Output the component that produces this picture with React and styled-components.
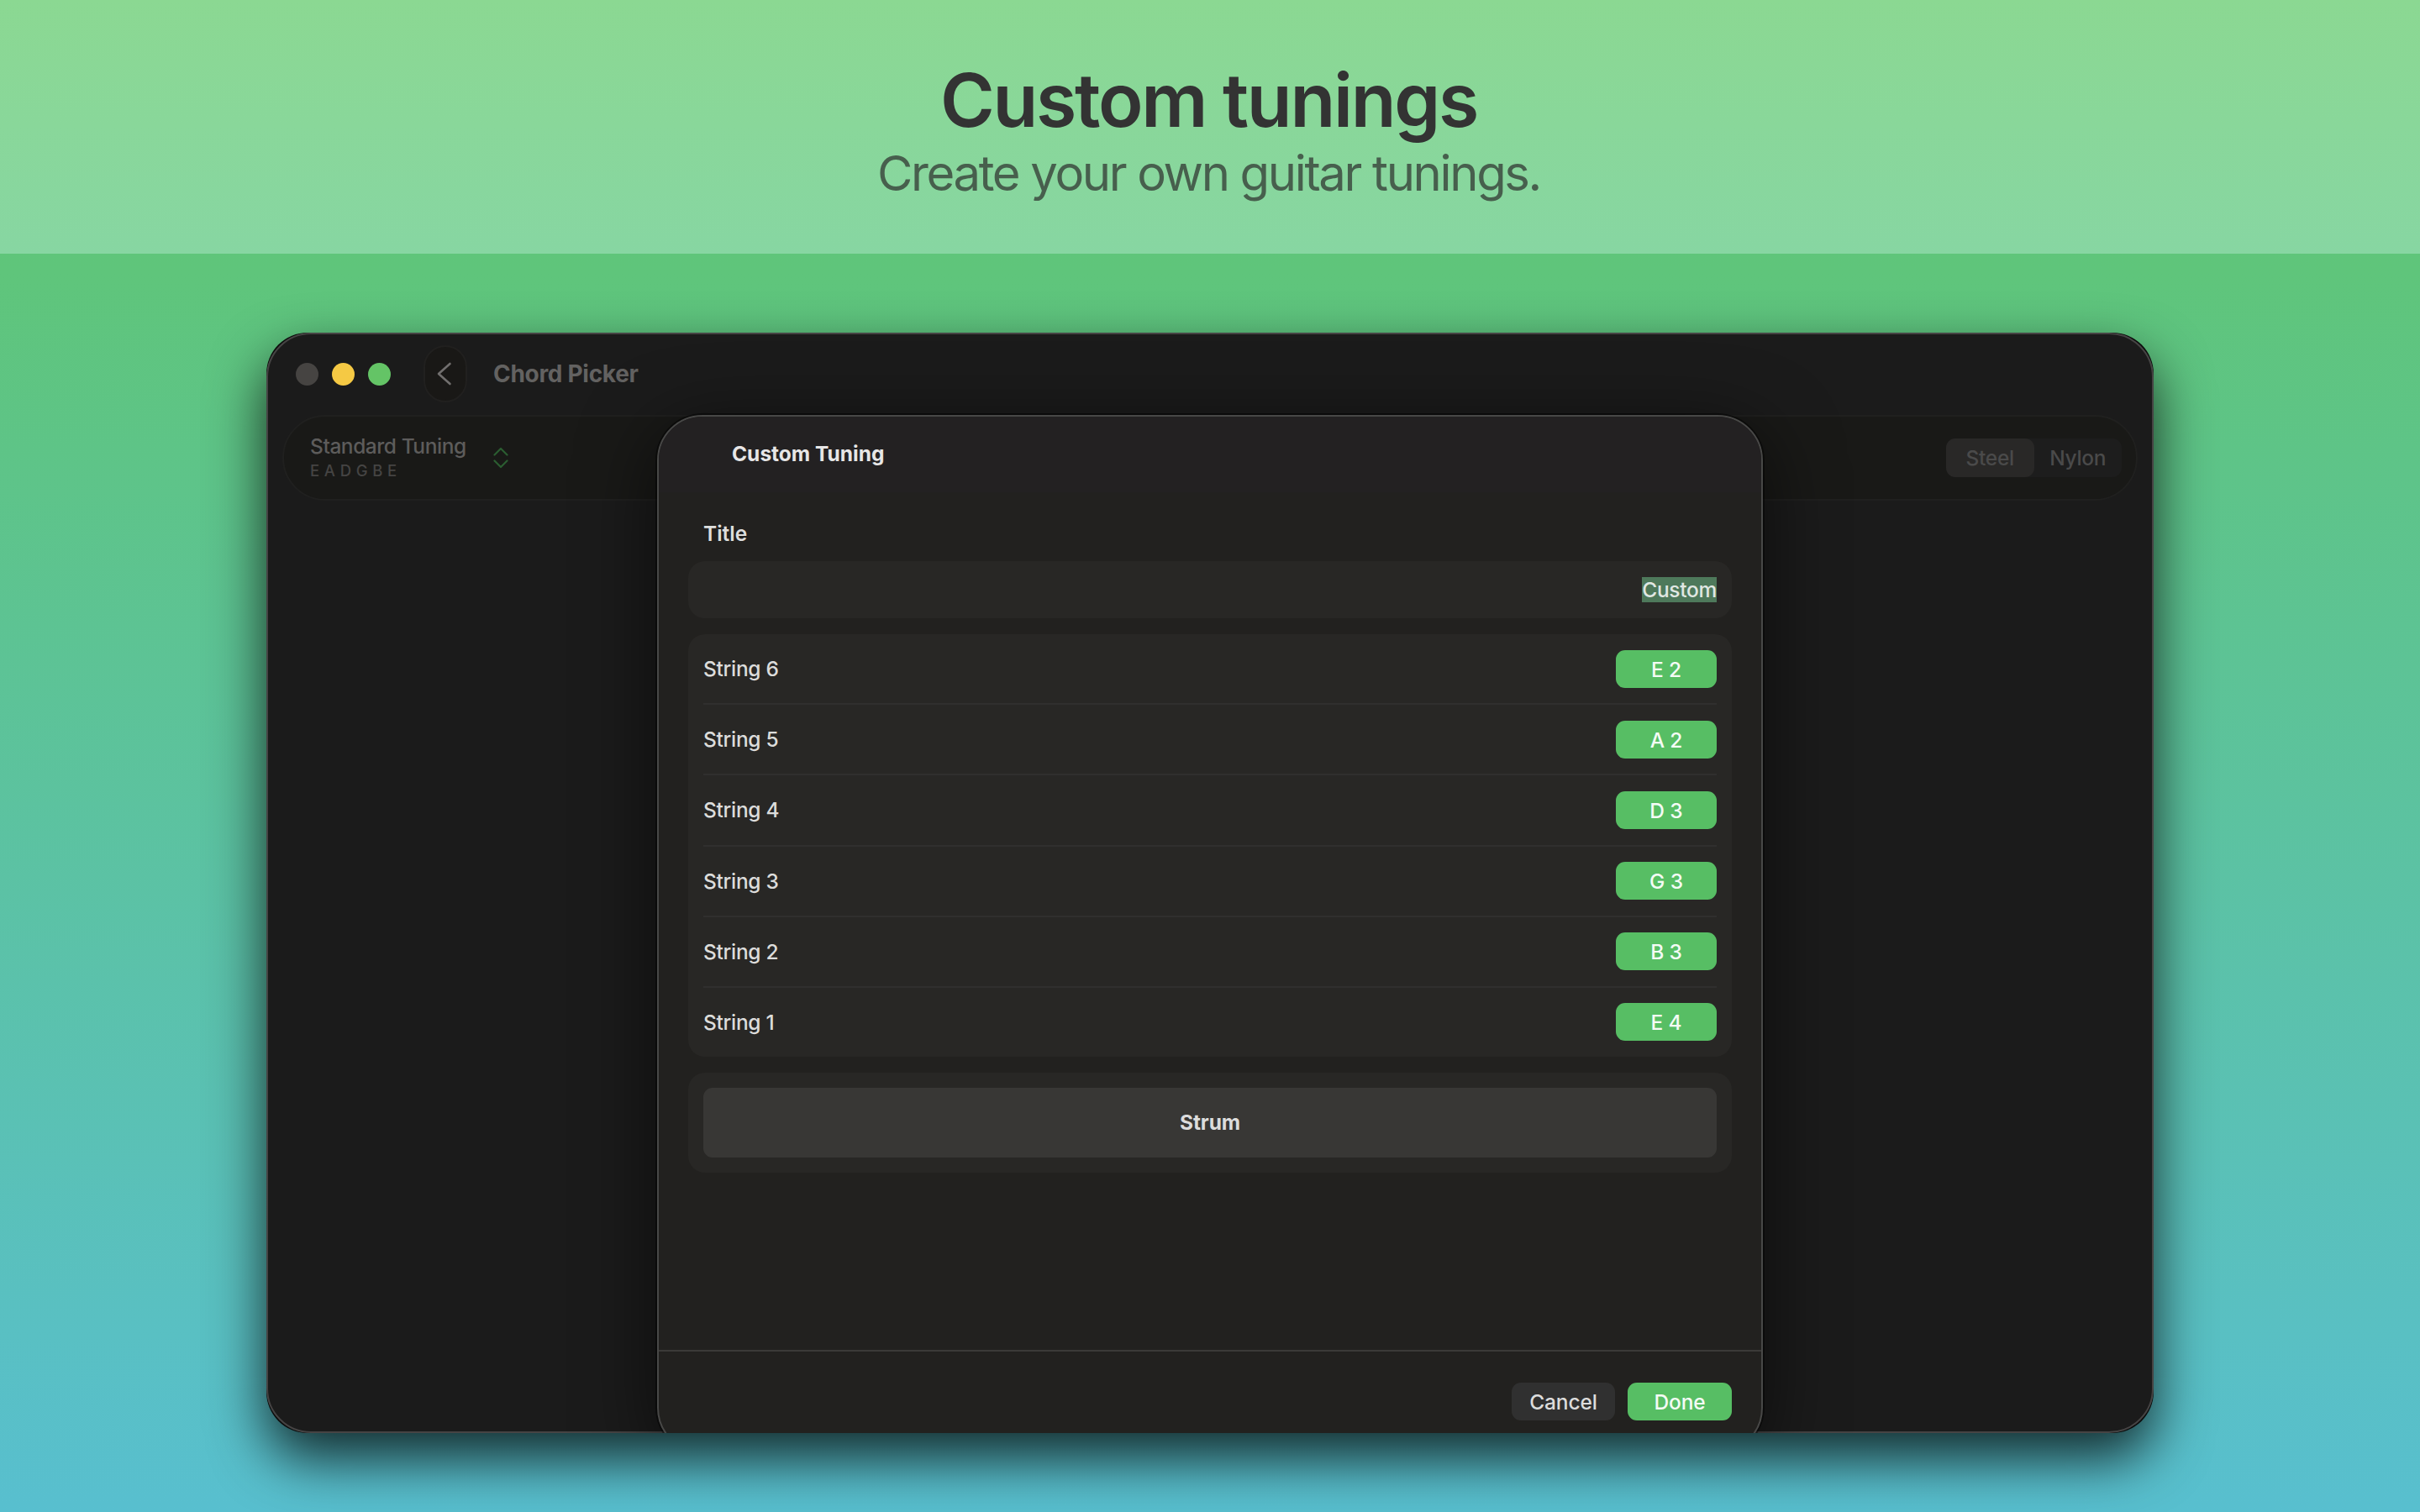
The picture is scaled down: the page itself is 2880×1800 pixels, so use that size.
import React from 'react';
import styled, { createGlobalStyle } from 'styled-components';

const GlobalStyle = createGlobalStyle`
    * {
        box-sizing: border-box;
    }
    body {
        margin: 0;
        font-family: Inter, "Liberation Sans", sans-serif;
    }
    p, h1, h2 {
        margin: 0;
        font-weight: inherit;
    }
    button {
        border: 0;
        padding: 0;
        font-family: inherit;
    }
`

const Page = styled.div`
    width: 2880px;
    height: 1800px;
    overflow: hidden;
    background: linear-gradient(180deg, #5fc671 0%, #5fc57b 18%, #58bfcf 100%);
`

const Banner = styled.header`
    height: 302px;
    padding: 66px 3px 0 0;
    text-align: center;
    background: linear-gradient(180deg, #8bd892, #87d6a2);
`

const Headline = styled.h1`
    font-size: 88px;
    line-height: 106px;
    font-weight: 600;
    letter-spacing: -2.3px;
    color: #333333;
`

const Tagline = styled.p`
    font-size: 58px;
    line-height: 69px;
    font-weight: 420;
    letter-spacing: -2.35px;
    color: #475f4d;
`

const Window = styled.div`
    position: relative;
    width: 2246px;
    height: 1310px;
    margin: 94px 0 0 317px;
    border-radius: 49px;
    background: #0b0b0b;
    box-shadow: 0 30px 66px rgba(0, 0, 0, 0.78);
`

const WindowBody = styled.div`
    height: 100%;
    border: 2px solid #464444;
    border-radius: 53px;
    padding: 13px 17px;
    background: #1b1b1b;
`

const TitleBar = styled.div`
    display: flex;
    align-items: center;
    height: 68px;
    padding-left: 16px;
`

const Light = styled.span`
    width: 27px;
    height: 27px;
    margin-right: 16px;
    border-radius: 50%;
    background: ${({ color }) => color};
`

const BackButton = styled.button`
    display: flex;
    align-items: center;
    justify-content: center;
    width: 52px;
    height: 68px;
    margin: 0 31px 0 23px;
    padding-right: 3px;
    border: 2px solid #21201f;
    border-radius: 26px;
    background: #191816;
`

const WindowTitle = styled.h2`
    font-size: 28px;
    font-weight: 700;
    letter-spacing: -0.3px;
    color: #636261;
`

const Toolbar = styled.div`
    display: flex;
    align-items: center;
    height: 102px;
    margin-top: 15px;
    padding: 0 17px 0 31px;
    border: 2px solid #20201f;
    border-radius: 51px;
    background: #191917;
`

const TuningName = styled.p`
    padding-top: 2px;
    font-size: 24.5px;
    line-height: 28px;
    font-weight: 450;
    letter-spacing: -0.45px;
    color: #5d5c5b;
`

const TuningNotes = styled.p`
    font-size: 18.5px;
    line-height: 30px;
    font-weight: 450;
    letter-spacing: 5.7px;
    color: #454443;
`

const UpDown = styled.svg`
    margin-left: 32px;
`

const Segmented = styled.div`
    display: flex;
    width: 209px;
    height: 46px;
    margin-left: auto;
    border-radius: 11px;
    background: #1d1d1d;
`

const Segment = styled.span`
    flex: 1;
    border-radius: 11px;
    font-size: 24.5px;
    line-height: 47px;
    font-weight: 450;
    letter-spacing: -0.3px;
    text-align: center;
    color: #4a4a4a;
    background: ${({ $active }) => $active ? '#292827' : 'transparent'};
`

// The window cuts off the lower edge of the sheet.
const SheetClip = styled.div`
    position: absolute;
    inset: 0;
    overflow: hidden;
    border-radius: 49px;
`

const Sheet = styled.section`
    position: absolute;
    top: 98px;
    left: 465px;
    display: flex;
    flex-direction: column;
    width: 1316px;
    height: 1236px;
    border: 2px solid #484847;
    border-radius: 54px;
    background: #22211f;
    box-shadow: 0 0 0 2px rgba(0, 0, 0, 0.45), 0 20px 90px rgba(0, 0, 0, 0.6);
`

const SheetHeader = styled.div`
    height: 90px;
    padding: 28px 0 0 87px;
    border-radius: 52px 52px 0 0;
    background: #232122;
    font-size: 24.5px;
    line-height: 32px;
    font-weight: 700;
    color: #e7e6e6;
`

const Form = styled.div`
    flex: 1;
    padding: 32px 35px 0;
`

const FieldTitle = styled.p`
    height: 50px;
    padding-left: 18px;
    font-size: 24.5px;
    line-height: 35px;
    font-weight: 600;
    color: #dededd;
`

const Card = styled.div`
    margin-bottom: 19px;
    padding: ${({ $pad }) => $pad || '0 18px'};
    border-radius: 20px;
    background: #282725;
`

const NameField = styled(Card)`
    display: flex;
    align-items: center;
    justify-content: flex-end;
    height: 68px;
`

const Selection = styled.span`
    height: 30px;
    font-size: 24.5px;
    line-height: 31px;
    font-weight: 450;
    letter-spacing: -0.3px;
    color: #e0e7e2;
    background: #4e795b;
`

const StringRow = styled.div`
    display: flex;
    align-items: center;
    justify-content: space-between;
    height: 84.2px;
    border-bottom: 2px solid #302f2e;
    font-size: 24.5px;
    font-weight: 450;
    letter-spacing: -0.3px;
    color: #dcdcdb;

    &:last-child {
        height: 82px;
        border: 0;
    }
`

const Button = styled.button`
    width: ${({ $width }) => $width};
    height: 45px;
    border-radius: 11px;
    font-size: 24.5px;
    line-height: 46px;
    font-weight: 450;
    letter-spacing: -0.1px;
    color: ${({ $primary }) => $primary ? '#f4fbf5' : '#dcdcdc'};
    background: ${({ $primary }) => $primary ? '#57be64' : '#303030'};
`

const StrumButton = styled(Button)`
    display: block;
    height: 83px;
    font-weight: 650;
    background: #383735;
`

const SheetFooter = styled.div`
    display: flex;
    justify-content: flex-end;
    gap: 15px;
    height: 121px;
    padding: 37px 35px 0;
    border-top: 2px solid #3b3a38;
`

const strings = [
    { id: 6, note: 'E 2' },
    { id: 5, note: 'A 2' },
    { id: 4, note: 'D 3' },
    { id: 3, note: 'G 3' },
    { id: 2, note: 'B 3' },
    { id: 1, note: 'E 4' },
]

const CustomTuningSheet = () => {
    return <Sheet>
        <SheetHeader>Custom Tuning</SheetHeader>
        <Form>
            <FieldTitle>Title</FieldTitle>
            <NameField>
                <Selection>Custom</Selection>
            </NameField>
            <Card>
                {strings.map(({ id, note }) => (
                    <StringRow key={id}>
                        <span>String {id}</span>
                        <Button $primary $width="120px">{note}</Button>
                    </StringRow>
                ))}
            </Card>
            <Card $pad="18px">
                <StrumButton $width="100%">Strum</StrumButton>
            </Card>
        </Form>
        <SheetFooter>
            <Button $width="123px">Cancel</Button>
            <Button $primary $width="124px">Done</Button>
        </SheetFooter>
    </Sheet>
}

const App = () => {
    return <Page>
        <GlobalStyle />
        <Banner>
            <Headline>Custom tunings</Headline>
            <Tagline>Create your own guitar tunings.</Tagline>
        </Banner>
        <Window>
            <WindowBody>
                <TitleBar>
                    <Light color="#464442" />
                    <Light color="#f5c944" />
                    <Light color="#64c466" />
                    <BackButton>
                        <svg width="18" height="28" viewBox="0 0 18 28" fill="none" stroke="#716f6e" strokeWidth="2.6" strokeLinecap="round" strokeLinejoin="round">
                            <path d="M15.5 2 L2 14 L15.5 26" />
                        </svg>
                    </BackButton>
                    <WindowTitle>Chord Picker</WindowTitle>
                </TitleBar>
                <Toolbar>
                    <div>
                        <TuningName>Standard Tuning</TuningName>
                        <TuningNotes>EADGBE</TuningNotes>
                    </div>
                    <UpDown width="18" height="26" viewBox="0 0 18 26" fill="none" stroke="#2b5d31" strokeWidth="2.2" strokeLinecap="round" strokeLinejoin="round">
                        <path d="M1.5 9.5 L9 2 L16.5 9.5" />
                        <path d="M1.5 16.5 L9 24 L16.5 16.5" />
                    </UpDown>
                    <Segmented>
                        <Segment $active>Steel</Segment>
                        <Segment>Nylon</Segment>
                    </Segmented>
                </Toolbar>
            </WindowBody>
            <SheetClip>
                <CustomTuningSheet />
            </SheetClip>
        </Window>
    </Page>
}

export default App
